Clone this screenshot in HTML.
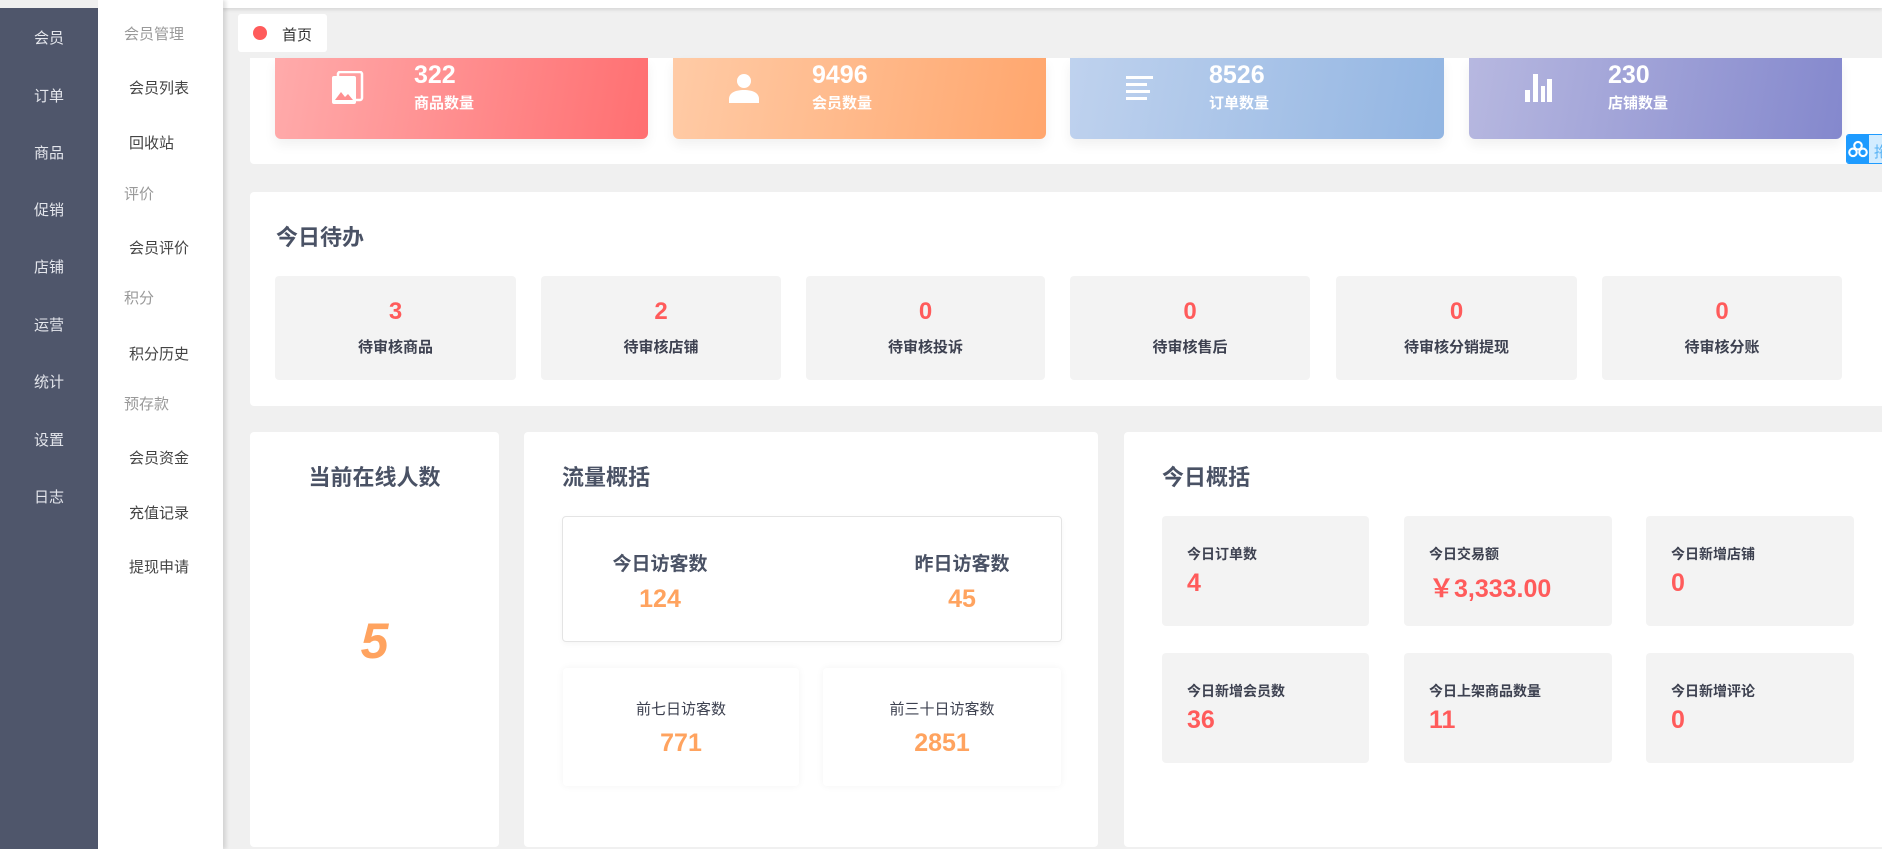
<!DOCTYPE html>
<html><head><meta charset="utf-8"><style>
*{margin:0;padding:0;box-sizing:border-box}
body{width:1882px;height:849px;overflow:hidden;background:#f0f0f0;font-family:"Liberation Sans","Noto Sans CJK SC",sans-serif;position:relative}
.a{position:absolute}
.nav{left:0;top:8px;width:98px;height:841px;background:#4f566b}
.nav div{position:absolute;left:0;width:98px;text-align:center;color:#e4e6ec;font-size:15px}
.sub{left:98px;top:0;width:125px;height:849px;background:#fff;box-shadow:3px 0 4px rgba(0,0,0,.12);z-index:3}
.sub div{position:absolute;font-size:15px;color:#444}
.sub .h{color:#999;left:26px}
.sub .i{left:31px}
.panel{background:#fff;border-radius:4px}
.card{border-radius:0 0 6px 6px;color:#fff;box-shadow:0 6px 12px rgba(0,0,0,.06)}
.card .n{position:absolute;left:139px;top:3px;font-size:25px;font-weight:bold}
.card .l{position:absolute;left:139px;top:34px;font-size:15px;font-weight:bold}
.card svg{position:absolute;left:55px;top:13px}
.td{background:#f3f3f3;border-radius:4px;text-align:center}
.td .n{position:absolute;width:100%;top:22px;font-size:24px;font-weight:bold;color:#ff5b5b}
.td .l{position:absolute;width:100%;top:60px;font-size:15px;font-weight:bold;color:#3d4150}
.t{font-size:22px;font-weight:bold;color:#4a5265}
.og{color:#ffa35f;font-weight:bold}
.tb{background:#f3f3f3;border-radius:4px}
.tb .l{position:absolute;left:25px;top:28px;font-size:14px;font-weight:bold;color:#3d4150}
.tb .n{position:absolute;left:25px;top:53px;font-size:25px;font-weight:bold;color:#ff5b5b}
</style></head><body>
<div class="a" style="left:223px;top:0;width:1659px;height:8px;background:#fff;box-shadow:0 2px 3px rgba(0,0,0,.1)"></div>
<div class="a nav">
<div style="top:19px">会员</div><div style="top:77px">订单</div><div style="top:134px">商品</div><div style="top:191px">促销</div><div style="top:248px">店铺</div><div style="top:306px">运营</div><div style="top:363px">统计</div><div style="top:421px">设置</div><div style="top:478px">日志</div>
</div>
<div class="a sub">
<div class="h" style="top:23px">会员管理</div>
<div class="i" style="top:77px">会员列表</div>
<div class="i" style="top:132px">回收站</div>
<div class="h" style="top:183px">评价</div>
<div class="i" style="top:237px">会员评价</div>
<div class="h" style="top:287px">积分</div>
<div class="i" style="top:343px">积分历史</div>
<div class="h" style="top:393px">预存款</div>
<div class="i" style="top:447px">会员资金</div>
<div class="i" style="top:502px">充值记录</div>
<div class="i" style="top:556px">提现申请</div>
</div>
<div class="a" style="left:238px;top:14px;width:89px;height:38px;background:#fff;border-radius:3px">
<div class="a" style="left:15px;top:12px;width:14px;height:14px;border-radius:50%;background:#ff5b5b"></div>
<div class="a" style="left:44px;top:10px;font-size:15px;color:#333">首页</div>
</div>
<div class="a panel" style="left:250px;top:58px;width:1640px;height:106px;border-radius:0 0 4px 4px"></div>
<div class="a card" style="left:275px;top:58px;width:373px;height:81px;background:linear-gradient(100deg,#ffabab,#ff6f71)">
<svg width="34" height="34" viewBox="0 0 34 34"><rect x="8" y="1" width="24" height="28" rx="2" fill="none" stroke="#fff" stroke-width="2.5"/><rect x="2" y="5" width="24" height="28" rx="2" fill="#fff"/><path d="M5 29l6-8 4 5 3-3 5 6z" fill="#ff8f90"/></svg>
<div class="n">322</div><div class="l">商品数量</div></div>
<div class="a card" style="left:673px;top:58px;width:373px;height:81px;background:linear-gradient(100deg,#ffcba6,#ffa66d)">
<svg width="32" height="32" viewBox="0 0 32 32"><circle cx="16" cy="10" r="7" fill="#fff"/><path d="M1 32v-4c0-6 6-9 15-9s15 3 15 9v4z" fill="#fff"/></svg>
<div class="n">9496</div><div class="l">会员数量</div></div>
<div class="a card" style="left:1070px;top:58px;width:374px;height:81px;background:linear-gradient(100deg,#bfd2ee,#92b5e2)">
<svg width="30" height="30" viewBox="0 0 30 30" style="left:55px;top:16px"><rect x="1" y="2" width="27" height="3" fill="#fff"/><rect x="1" y="9" width="21" height="3" fill="#fff"/><rect x="1" y="16" width="24" height="3" fill="#fff"/><rect x="1" y="23" width="21" height="3" fill="#fff"/></svg>
<div class="n">8526</div><div class="l">订单数量</div></div>
<div class="a card" style="left:1469px;top:58px;width:373px;height:81px;background:linear-gradient(100deg,#b7b8e0,#8488cd)">
<svg width="30" height="32" viewBox="0 0 30 32" style="left:55px;top:14px"><rect x="1" y="18" width="5" height="12" fill="#fff"/><rect x="9" y="2" width="5" height="28" fill="#fff"/><rect x="17" y="14" width="4" height="16" fill="#fff"/><rect x="23" y="7" width="5" height="23" fill="#fff"/></svg>
<div class="n">230</div><div class="l">店铺数量</div></div>
<div class="a" style="left:1846px;top:134px;width:40px;height:30px;background:#d2ecff;border:1px solid #1e9bff;border-radius:3px 0 0 3px;overflow:hidden">
<div class="a" style="left:0;top:0;width:22px;height:30px;background:#1e9bff"></div>
<svg width="20" height="18" viewBox="0 0 24 20" style="position:absolute;left:1px;top:5px"><circle cx="12" cy="6" r="4.5" fill="none" stroke="#fff" stroke-width="2.5"/><circle cx="6" cy="14" r="4.5" fill="none" stroke="#fff" stroke-width="2.5"/><circle cx="18" cy="14" r="4.5" fill="none" stroke="#fff" stroke-width="2.5"/></svg>
<div class="a" style="left:27px;top:6px;font-size:15px;color:#5ab4f5">拖</div>
</div>
<div class="a panel" style="left:250px;top:192px;width:1640px;height:214px"></div>
<div class="a t" style="left:276px;top:220px">今日待办</div>
<div class="a td" style="left:275px;top:276px;width:241px;height:104px"><div class="n">3</div><div class="l">待审核商品</div></div>
<div class="a td" style="left:541px;top:276px;width:240px;height:104px"><div class="n">2</div><div class="l">待审核店铺</div></div>
<div class="a td" style="left:806px;top:276px;width:239px;height:104px"><div class="n">0</div><div class="l">待审核投诉</div></div>
<div class="a td" style="left:1070px;top:276px;width:240px;height:104px"><div class="n">0</div><div class="l">待审核售后</div></div>
<div class="a td" style="left:1336px;top:276px;width:241px;height:104px"><div class="n">0</div><div class="l">待审核分销提现</div></div>
<div class="a td" style="left:1602px;top:276px;width:240px;height:104px"><div class="n">0</div><div class="l">待审核分账</div></div>
<div class="a panel" style="left:250px;top:432px;width:249px;height:415px"></div>
<div class="a t" style="left:250px;top:460px;width:249px;text-align:center">当前在线人数</div>
<div class="a og" style="left:250px;top:612px;width:249px;text-align:center;font-size:50px;font-style:italic">5</div>
<div class="a panel" style="left:524px;top:432px;width:574px;height:415px"></div>
<div class="a t" style="left:562px;top:460px">流量概括</div>
<div class="a" style="left:562px;top:516px;width:500px;height:126px;border:1px solid #e4e4e4;border-radius:4px;box-shadow:0 2px 6px rgba(0,0,0,.04)"></div>
<div class="a" style="left:600px;top:549px;width:120px;text-align:center;font-size:19px;font-weight:bold;color:#4a5265">今日访客数</div>
<div class="a og" style="left:600px;top:585px;width:120px;text-align:center;font-size:25px">124</div>
<div class="a" style="left:902px;top:549px;width:120px;text-align:center;font-size:19px;font-weight:bold;color:#4a5265">昨日访客数</div>
<div class="a og" style="left:902px;top:585px;width:120px;text-align:center;font-size:25px">45</div>
<div class="a" style="left:563px;top:668px;width:236px;height:118px;border-radius:4px;box-shadow:0 0 8px rgba(0,0,0,.05)"></div>
<div class="a" style="left:563px;top:698px;width:236px;text-align:center;font-size:15px;color:#3d4150">前七日访客数</div>
<div class="a og" style="left:563px;top:729px;width:236px;text-align:center;font-size:25px">771</div>
<div class="a" style="left:823px;top:668px;width:238px;height:118px;border-radius:4px;box-shadow:0 0 8px rgba(0,0,0,.05)"></div>
<div class="a" style="left:823px;top:698px;width:238px;text-align:center;font-size:15px;color:#3d4150">前三十日访客数</div>
<div class="a og" style="left:823px;top:729px;width:238px;text-align:center;font-size:25px">2851</div>
<div class="a panel" style="left:1124px;top:432px;width:770px;height:415px"></div>
<div class="a t" style="left:1162px;top:460px">今日概括</div>
<div class="a tb" style="left:1162px;top:516px;width:207px;height:110px"><div class="l">今日订单数</div><div class="n">4</div></div>
<div class="a tb" style="left:1404px;top:516px;width:208px;height:110px"><div class="l">今日交易额</div><div class="n">￥3,333.00</div></div>
<div class="a tb" style="left:1646px;top:516px;width:208px;height:110px"><div class="l">今日新增店铺</div><div class="n">0</div></div>
<div class="a tb" style="left:1162px;top:653px;width:207px;height:110px"><div class="l">今日新增会员数</div><div class="n">36</div></div>
<div class="a tb" style="left:1404px;top:653px;width:208px;height:110px"><div class="l">今日上架商品数量</div><div class="n">11</div></div>
<div class="a tb" style="left:1646px;top:653px;width:208px;height:110px"><div class="l">今日新增评论</div><div class="n">0</div></div>
</body></html>
